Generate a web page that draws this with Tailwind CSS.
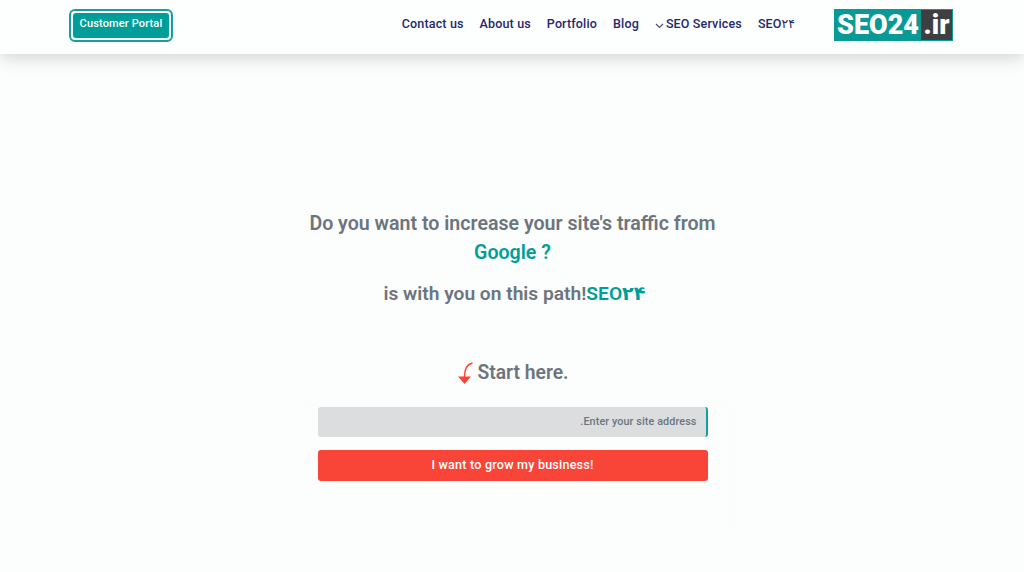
<!DOCTYPE html>
<html lang="en">
<head>
<meta charset="utf-8">
<script src="https://cdn.jsdelivr.net/npm/@tailwindcss/browser@4"></script>
<title>SEO24</title>
</head>
<body class="bg-[#fcfdfd] font-['Roboto','DejaVu_Sans',sans-serif] overflow-hidden">
<div class="w-[1024px] h-[572px] overflow-hidden flex flex-col">
  <header class="h-[54px] shrink-0 bg-[#fdfefe] shadow-[0_4px_16px_rgba(0,0,0,0.17)] flex items-start justify-between pl-[69px] pr-[71px] pt-[9px]">
    <a class="w-[104px] h-[33px] rounded-[6px] border-2 border-[#14a09b] p-[2px] block">
      <span class="h-full w-full bg-[#009e98] rounded-[3px] flex items-center justify-center pb-[2px] text-white text-[11px] font-medium tracking-[0.15px]">Customer Portal</span>
    </a>
    <div class="flex items-start">
      <nav class="flex items-center gap-4 h-[30px] text-[#23286b] text-[12.5px] font-medium tracking-[0.15px]">
        <a>Contact us</a>
        <a>About us</a>
        <a>Portfolio</a>
        <a>Blog</a>
        <a class="flex items-center gap-[2px]">
          <svg class="mt-[3px]" width="9" height="6" viewBox="0 0 9 6" fill="none" stroke="#4b4f7c" stroke-width="1.2"><path d="M1 1l3.500 3.500L8 1"/></svg>
          <span>SEO Services</span>
        </a>
        <a>SEO۲۴</a>
      </nav>
      <div class="ml-[39px] w-[119px] h-[32px] bg-[#0a9a96] border border-[#0a9a96] flex items-center overflow-hidden font-black text-white text-[27px] leading-none">
        <span class="w-[86px] text-center">SEO24</span>
        <span class="flex-1 h-full bg-[#3d3f40] flex items-center justify-center">.ir</span>
      </div>
    </div>
  </header>
  <main class="flex flex-col items-center pt-[155px] pl-[1px]">
    <h1 class="w-[420px] text-center text-[19.6px] leading-[29px] font-semibold text-[#6c757d]">Do you want to increase your site's traffic from <span class="text-[#009e98]">Google ?</span></h1>
    <p class="mt-[12px] h-[29px] pl-[4px] flex items-center justify-center text-[19.2px] leading-[29px] font-semibold text-[#6c757d]">is with you on this path!<span class="text-[#009e98]">SEO۲۴</span></p>
    <div class="mt-[50px] h-[30px] flex items-center gap-[3px] text-[19.3px] font-semibold text-[#6c757d]">
      <svg width="18" height="24" viewBox="0 0 18 24" fill="none"><path d="M16.500 2C11.500 3 8.500 7 8.500 16" stroke="#f94438" stroke-width="1.500"/><path d="M2 15.500h13L8.500 23z" fill="#f94438"/></svg>
      <span>Start here.</span>
    </div>
    <form class="mt-[19px] w-[432px] h-[128px] shadow-[0_0_8px_rgba(240,243,245,0.12)] px-[21px] flex flex-col gap-[13px]">
      <div class="h-[30px] bg-[#dcdddf] rounded-[3px] border-r-2 border-[#14a09b] flex items-center justify-end pr-[9px] text-[10.8px] font-medium tracking-[0.1px] text-[#6c757d]">.Enter your site address</div>
      <button type="button" class="h-[31px] bg-[#f94438] rounded-[3px] text-white text-[12.6px] font-medium tracking-[0.2px]">I want to grow my business!</button>
    </form>
  </main>
</div>
</body>
</html>
